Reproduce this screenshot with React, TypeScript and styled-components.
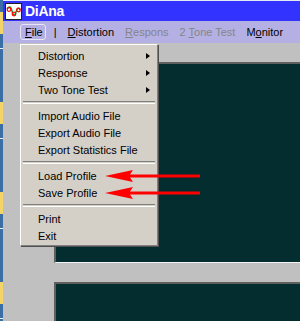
import * as React from "react";
import styled, { createGlobalStyle } from "styled-components";

const GlobalStyle = createGlobalStyle`
  html, body {
    margin: 0;
    padding: 0;
    overflow: hidden;
  }
  body {
    font-family: "Liberation Sans", Arial, sans-serif;
    font-size: 11px;
  }
`;

export const Screen = styled.div`
  position: relative;
  width: 300px;
  height: 321px;
  display: flex;
  overflow: hidden;
  background: #c0c0c0;
`;

export const DesktopEdge = styled.div`
  width: 3px;
  flex: none;
  background: repeating-linear-gradient(
    to bottom,
    #3a6ea5 0px,
    #3a6ea5 12px,
    #f2d468 12px,
    #f2d468 34px,
    #3a6ea5 34px,
    #3a6ea5 48px,
    #e8eef8 48px,
    #e8eef8 49px,
    #3a6ea5 49px,
    #3a6ea5 90px
  );
`;

export const AppWindow = styled.div`
  flex: 1;
  display: flex;
  flex-direction: column;
  min-width: 0;
`;

export const TitleBar = styled.div`
  height: 20px;
  border-top: 1px solid #e4e8f4;
  background: #3333ff;
  display: flex;
  align-items: center;
  gap: 3px;
  padding-left: 2px;
`;

export const TitleText = styled.span`
  color: #ffffff;
  font-weight: bold;
  font-size: 14px;
  letter-spacing: -0.3px;
`;

export const MenuBar = styled.div`
  height: 22px;
  background: #b4b0e4;
  display: flex;
  align-items: center;
  gap: 1px;
  padding-left: 17px;
`;

export const MenuItem = styled.span<{ $disabled?: boolean; $open?: boolean }>`
  color: ${(p) => (p.$disabled ? "#858585" : "#000000")};
  padding: ${(p) => (p.$open ? "1px 2px 1px 4px" : "2px 5px")};
  border: ${(p) => (p.$open ? "1px solid #e8e6f6" : "none")};
  border-radius: ${(p) => (p.$open ? "3px" : "0")};
  margin-right: ${(p) => (p.$open ? "2px" : "0")};
  white-space: nowrap;
  u {
    text-decoration: underline;
  }
`;

export const Workspace = styled.div`
  flex: 1;
  display: flex;
  flex-direction: column;
  gap: 19px;
  padding: 19px 0 0 51px;
`;

export const Panel = styled.div<{ $height?: number }>`
  background: #032d2f;
  border-top: 2px solid #5f5f5f;
  border-left: 2px solid #5f5f5f;
  border-bottom: ${(p) => (p.$height ? "1px solid #f4f4f4" : "none")};
  height: ${(p) => (p.$height ? `${p.$height}px` : "auto")};
  flex: ${(p) => (p.$height ? "none" : "1")};
  margin-right: -4px;
`;

export const Dropdown = styled.div`
  position: absolute;
  left: 20px;
  top: 44px;
  width: 136px;
  padding: 2px 0 1px;
  background: #d4d0c8;
  border-top: 1px solid #ffffff;
  border-left: 1px solid #ffffff;
  border-right: 1px solid #808080;
  border-bottom: 1px solid #808080;
  box-shadow: 1px 1px 0 #505050;
  color: #000;
`;

export const DropItem = styled.div`
  height: 17px;
  display: flex;
  align-items: center;
  justify-content: space-between;
  padding: 0 7px 0 17px;
`;

export const SubArrow = styled.span`
  width: 0;
  height: 0;
  border-top: 3.5px solid transparent;
  border-bottom: 3.5px solid transparent;
  border-left: 4px solid #000;
`;

export const Separator = styled.div`
  height: 9px;
  display: flex;
  align-items: center;
  padding: 0 2px;
  &::after {
    content: "";
    flex: 1;
    height: 1px;
    border-top: 1px solid #808080;
    border-bottom: 1px solid #ffffff;
  }
`;

export const Annotations = styled.svg`
  position: absolute;
  left: 0;
  top: 0;
  pointer-events: none;
`;

const AppIcon = () => (
  <svg width="17" height="17" viewBox="0 0 17 17">
    <rect x="0.5" y="0.5" width="16" height="16" fill="#ffffff" stroke="#202020" />
    <path
      d="M2 6 C4 3 6 3 7 8 S10 13 11 9 S14 4 15 7"
      fill="none"
      stroke="#00a020"
      strokeWidth="1.4"
    />
    <circle cx="4" cy="6.5" r="1.8" fill="none" stroke="#ff0000" strokeWidth="1.2" />
    <circle cx="9" cy="11" r="1.8" fill="none" stroke="#ff0000" strokeWidth="1.2" />
    <circle cx="13.5" cy="7" r="1.8" fill="none" stroke="#ff0000" strokeWidth="1.2" />
  </svg>
);

const arrowAt = (y: number) =>
  `105,${y} 133,${y - 6} 130,${y - 1.5} 200,${y - 1.5} 200,${y + 1.5} 130,${y + 1.5} 133,${y + 6}`;

type Entry = { label?: string; sub?: boolean; sep?: boolean };

const fileMenu: Entry[] = [
  { label: "Distortion", sub: true },
  { label: "Response", sub: true },
  { label: "Two Tone Test", sub: true },
  { sep: true },
  { label: "Import Audio File" },
  { label: "Export Audio File" },
  { label: "Export Statistics File" },
  { sep: true },
  { label: "Load Profile" },
  { label: "Save Profile" },
  { sep: true },
  { label: "Print" },
  { label: "Exit" },
];

export default class App extends React.Component {
  render() {
    return (
      <>
        <GlobalStyle />
        <Screen>
          <DesktopEdge />
          <AppWindow>
            <TitleBar>
              <AppIcon />
              <TitleText>DiAna</TitleText>
            </TitleBar>
            <MenuBar>
              <MenuItem $open>
                <u>F</u>ile
              </MenuItem>
              <MenuItem>|</MenuItem>
              <MenuItem>
                <u>D</u>istortion
              </MenuItem>
              <MenuItem $disabled>
                <u>R</u>espons
              </MenuItem>
              <MenuItem $disabled>
                2 <u>T</u>one Test
              </MenuItem>
              <MenuItem>
                M<u>o</u>nitor
              </MenuItem>
            </MenuBar>
            <Workspace>
              <Panel $height={198} />
              <Panel />
            </Workspace>
          </AppWindow>

          <Dropdown>
            {fileMenu.map((e, i) =>
              e.sep ? (
                <Separator key={i} />
              ) : (
                <DropItem key={i}>
                  <span>{e.label}</span>
                  {e.sub && <SubArrow />}
                </DropItem>
              )
            )}
          </Dropdown>

          <Annotations width="300" height="321" viewBox="0 0 300 321">
            <polygon points={arrowAt(176)} fill="#ff0000" />
            <polygon points={arrowAt(193)} fill="#ff0000" />
          </Annotations>
        </Screen>
      </>
    );
  }
}
